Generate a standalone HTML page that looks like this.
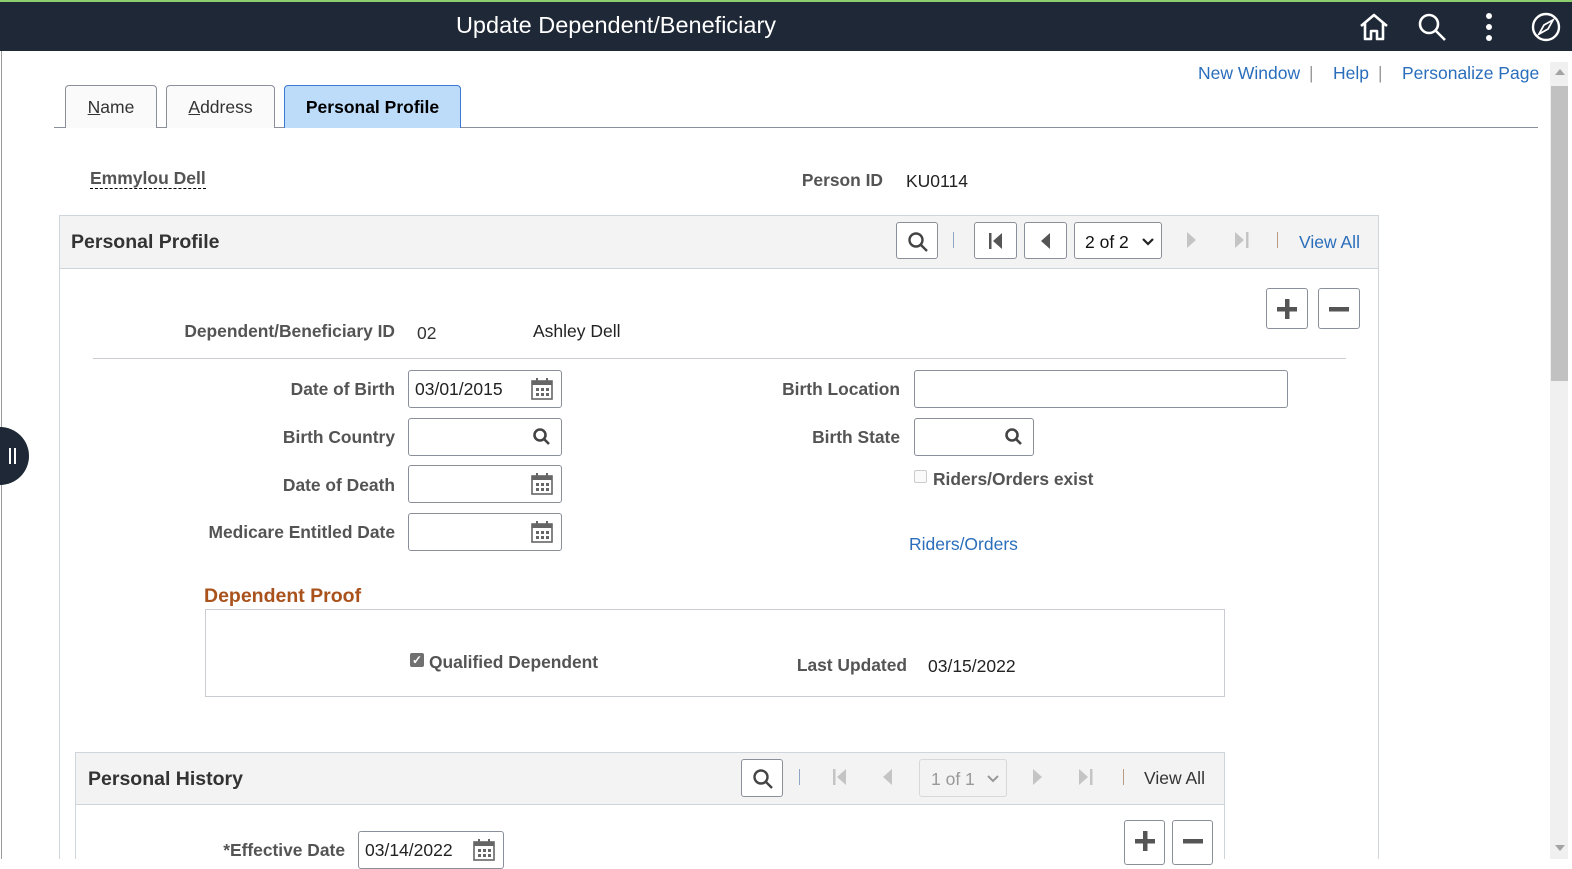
<!DOCTYPE html>
<html><head><style>
*{box-sizing:border-box;margin:0;padding:0}
body{width:1572px;height:859px;overflow:hidden;background:#fff;font-family:"Liberation Sans",sans-serif;position:relative;color:#333}
.a{position:absolute}
.hdr{left:0;top:0;width:1572px;height:51px;background:#1f2836;border-top:2px solid #8ccf6f}
.lbl{font-weight:bold;color:#545454;font-size:17.4px;text-align:right}
.box{border:1px solid #8a8f99;border-radius:3px;background:#fff}
.lnk{color:#2a6ebb;font-size:17.5px}
.btn{border:1px solid #8a8f99;border-radius:3px;background:#fff}
.cal{position:absolute;right:8px;top:7px;width:22px;height:22px}
</style></head><body>
<div class="a hdr"></div>
<div class="a" style="left:0;top:12px;width:1232px;text-align:center;color:#fff;font-size:23.5px">Update Dependent/Beneficiary</div>
<svg class="a" style="left:1358px;top:12px" width="32" height="30" viewBox="0 0 32 30" fill="none" stroke="#fff" stroke-width="2.6" stroke-linejoin="round"><path d="M3 14 L16 3 L29 14 M7 11 V27 H13 V19 H19 V27 H25 V11"/></svg>
<svg class="a" style="left:1416px;top:12px" width="32" height="30" viewBox="0 0 32 30" fill="none" stroke="#fff" stroke-width="2.6"><circle cx="13" cy="12" r="9"/><path d="M20 19 L29 28"/></svg>
<svg class="a" style="left:1480px;top:12px" width="18" height="30"><circle cx="9" cy="4" r="3" fill="#fff"/><circle cx="9" cy="15" r="3" fill="#fff"/><circle cx="9" cy="26" r="3" fill="#fff"/></svg>
<svg class="a" style="left:1530px;top:11px" width="32" height="32" viewBox="0 0 32 32" fill="none" stroke="#fff" stroke-width="2.4"><circle cx="16" cy="16" r="13"/><path d="M23 9 L18 18 L9 23 L14 14 Z" stroke-width="1.8"/></svg>
<div class="a" style="left:1px;top:51px;width:1px;height:808px;background:#999"></div>
<!-- scrollbar -->
<div class="a" style="left:1550px;top:62px;width:18px;height:797px;background:#f0f0f0"></div>
<div class="a" style="left:1551px;top:86px;width:17px;height:295px;background:#c1c1c1"></div>
<div class="a" style="left:1555px;top:69px;border:5px solid transparent;border-bottom:6px solid #a3a3a3;border-top:0"></div>
<div class="a" style="left:1555px;top:845px;border:5px solid transparent;border-top:6px solid #a3a3a3;border-bottom:0"></div>
<!-- links -->
<div class="a lnk" style="left:1198px;top:63px">New Window</div>
<div class="a" style="left:1309px;top:63px;color:#999;font-size:17.5px">|</div>
<div class="a lnk" style="left:1333px;top:63px">Help</div>
<div class="a" style="left:1378px;top:63px;color:#999;font-size:17.5px">|</div>
<div class="a lnk" style="left:1402px;top:63px">Personalize Page</div>
<!-- tabs -->
<div class="a" style="left:54px;top:127px;width:1484px;height:1px;background:#8a8f99"></div>
<div class="a" style="left:65px;top:85px;width:92px;height:43px;border:1px solid #8a8f99;border-bottom:0;border-radius:4px 4px 0 0;background:#fafafa;text-align:center;line-height:42px;font-size:17.5px"><u>N</u>ame</div>
<div class="a" style="left:166px;top:85px;width:109px;height:43px;border:1px solid #8a8f99;border-bottom:0;border-radius:4px 4px 0 0;background:#fafafa;text-align:center;line-height:42px;font-size:17.5px"><u>A</u>ddress</div>
<div class="a" style="left:284px;top:85px;width:177px;height:43px;border:1px solid #3a7ad0;border-bottom:0;border-radius:4px 4px 0 0;background:#bcdcfa;text-align:center;line-height:42px;font-size:17.5px;font-weight:bold;color:#000">Personal Profile</div>
<div class="a" style="left:90px;top:168px;font-size:17.5px;font-weight:bold;color:#545454;border-bottom:1px dashed #000;line-height:20px">Emmylou Dell</div>
<div class="a lbl" style="left:683px;top:170px;width:200px">Person ID</div>
<div class="a" style="left:906px;top:171px;font-size:17.5px;color:#222">KU0114</div>
<!-- personal profile panel -->
<div class="a" style="left:59px;top:215px;width:1320px;height:644px;border:1px solid #d0d5dc;border-bottom:0"></div>
<div class="a" style="left:60px;top:216px;width:1318px;height:53px;background:#f3f3f3;border-bottom:1px solid #d0d5dc"></div>
<div class="a" style="left:71px;top:231px;font-size:19.5px;font-weight:bold;color:#333">Personal Profile</div>
<div class="a btn" style="left:896px;top:222px;width:42px;height:37px"><svg style="margin:8px 0 0 10px" width="22" height="22" viewBox="0 0 22 22" fill="none" stroke="#444" stroke-width="2.4"><circle cx="9" cy="9" r="6.5"/><path d="M14 14 L20 20"/></svg></div>
<div class="a" style="left:953px;top:232px;width:1px;height:16px;background:#8ea6c4"></div>
<div class="a btn" style="left:974px;top:222px;width:43px;height:37px"><svg style="margin:10px 0 0 13px" width="16" height="16"><rect x="1" y="0" width="2.5" height="16" fill="#555"/><path d="M14 0 L5 8 L14 16Z" fill="#555"/></svg></div>
<div class="a btn" style="left:1024px;top:222px;width:43px;height:37px"><svg style="margin:10px 0 0 15px" width="12" height="16"><path d="M10 0 L1 8 L10 16Z" fill="#555"/></svg></div>
<div class="a btn" style="left:1074px;top:222px;width:88px;height:37px;font-size:17.5px;color:#111;padding:9px 0 0 10px">2 of 2<svg style="position:absolute;left:66px;top:14px" width="14" height="10" fill="none" stroke="#222" stroke-width="2.2"><path d="M2 2 L7 7 L12 2"/></svg></div>
<svg class="a" style="left:1186px;top:232px" width="12" height="16"><path d="M1 0 L10 8 L1 16Z" fill="#c4c4c4"/></svg>
<svg class="a" style="left:1234px;top:232px" width="16" height="16"><path d="M1 0 L10 8 L1 16Z" fill="#c4c4c4"/><rect x="12" y="0" width="2.5" height="16" fill="#c4c4c4"/></svg>
<div class="a" style="left:1277px;top:232px;width:1px;height:16px;background:#b99a82"></div>
<div class="a lnk" style="left:1299px;top:232px">View All</div>
<div class="a btn" style="left:1266px;top:288px;width:42px;height:41px"><svg style="margin:10px 0 0 10px" width="20" height="20"><rect x="8" y="0" width="4.5" height="20" fill="#555"/><rect x="0" y="8" width="20" height="4.5" fill="#555"/></svg></div>
<div class="a btn" style="left:1318px;top:288px;width:42px;height:41px"><svg style="margin:10px 0 0 10px" width="20" height="20"><rect x="0" y="8" width="20" height="4.5" fill="#555"/></svg></div>
<div class="a lbl" style="left:120px;top:321px;width:275px">Dependent/Beneficiary ID</div>
<div class="a" style="left:417px;top:323px;font-size:17.5px">02</div>
<div class="a" style="left:533px;top:321px;font-size:17.5px;color:#222">Ashley Dell</div>
<div class="a" style="left:93px;top:358px;width:1253px;height:1px;background:#c9cdd3"></div>
<!-- fields left -->
<div class="a lbl" style="left:120px;top:379px;width:275px">Date of Birth</div>
<div class="a box" style="left:408px;top:370px;width:154px;height:38px"><span style="position:absolute;left:6px;top:8px;font-size:17.5px;color:#222">03/01/2015</span>
<svg class="cal" viewBox="0 0 22 22"><rect x="1" y="3" width="20" height="18" fill="none" stroke="#666" stroke-width="1.6"/><rect x="1" y="3" width="20" height="4" fill="#666"/><rect x="5" y="0" width="2" height="4" fill="#666"/><rect x="15" y="0" width="2" height="4" fill="#666"/><g fill="#666"><rect x="5" y="10" width="3" height="3"/><rect x="10" y="10" width="3" height="3"/><rect x="15" y="10" width="3" height="3"/><rect x="5" y="15" width="3" height="3"/><rect x="10" y="15" width="3" height="3"/><rect x="15" y="15" width="3" height="3"/></g></svg></div>
<div class="a lbl" style="left:120px;top:427px;width:275px">Birth Country</div>
<div class="a box" style="left:408px;top:418px;width:154px;height:38px"><svg style="position:absolute;right:10px;top:8px" width="19" height="19" fill="none" stroke="#444" stroke-width="2.6"><circle cx="8" cy="8" r="5.5"/><path d="M12 12 L17 17"/></svg></div>
<div class="a lbl" style="left:120px;top:475px;width:275px">Date of Death</div>
<div class="a box" style="left:408px;top:465px;width:154px;height:38px"><svg class="cal" viewBox="0 0 22 22"><rect x="1" y="3" width="20" height="18" fill="none" stroke="#666" stroke-width="1.6"/><rect x="1" y="3" width="20" height="4" fill="#666"/><rect x="5" y="0" width="2" height="4" fill="#666"/><rect x="15" y="0" width="2" height="4" fill="#666"/><g fill="#666"><rect x="5" y="10" width="3" height="3"/><rect x="10" y="10" width="3" height="3"/><rect x="15" y="10" width="3" height="3"/><rect x="5" y="15" width="3" height="3"/><rect x="10" y="15" width="3" height="3"/><rect x="15" y="15" width="3" height="3"/></g></svg></div>
<div class="a lbl" style="left:120px;top:522px;width:275px">Medicare Entitled Date</div>
<div class="a box" style="left:408px;top:513px;width:154px;height:38px"><svg class="cal" viewBox="0 0 22 22"><rect x="1" y="3" width="20" height="18" fill="none" stroke="#666" stroke-width="1.6"/><rect x="1" y="3" width="20" height="4" fill="#666"/><rect x="5" y="0" width="2" height="4" fill="#666"/><rect x="15" y="0" width="2" height="4" fill="#666"/><g fill="#666"><rect x="5" y="10" width="3" height="3"/><rect x="10" y="10" width="3" height="3"/><rect x="15" y="10" width="3" height="3"/><rect x="5" y="15" width="3" height="3"/><rect x="10" y="15" width="3" height="3"/><rect x="15" y="15" width="3" height="3"/></g></svg></div>
<!-- right fields -->
<div class="a lbl" style="left:700px;top:379px;width:200px">Birth Location</div>
<div class="a box" style="left:914px;top:370px;width:374px;height:38px"></div>
<div class="a lbl" style="left:700px;top:427px;width:200px">Birth State</div>
<div class="a box" style="left:914px;top:418px;width:120px;height:38px"><svg style="position:absolute;right:10px;top:8px" width="19" height="19" fill="none" stroke="#444" stroke-width="2.6"><circle cx="8" cy="8" r="5.5"/><path d="M12 12 L17 17"/></svg></div>
<div class="a" style="left:914px;top:470px;width:13px;height:13px;border:1px solid #ccc;border-radius:2px;background:#fafafa"></div>
<div class="a lbl" style="left:933px;top:469px;text-align:left">Riders/Orders exist</div>
<div class="a lnk" style="left:909px;top:534px">Riders/Orders</div>
<!-- dependent proof -->
<div class="a" style="left:204px;top:585px;font-size:19.5px;font-weight:bold;color:#a9521c">Dependent Proof</div>
<div class="a" style="left:205px;top:609px;width:1020px;height:88px;border:1px solid #c9cdd3"></div>
<div class="a" style="left:410px;top:653px;width:14px;height:14px;border-radius:2px;background:#707070;color:#fff;font-size:12px;line-height:14px;text-align:center;font-weight:bold">✓</div>
<div class="a lbl" style="left:429px;top:652px;text-align:left">Qualified Dependent</div>
<div class="a lbl" style="left:707px;top:655px;width:200px">Last Updated</div>
<div class="a" style="left:928px;top:656px;font-size:17.5px;color:#222">03/15/2022</div>
<!-- personal history -->
<div class="a" style="left:75px;top:752px;width:1150px;height:107px;border:1px solid #d0d5dc;border-bottom:0"></div>
<div class="a" style="left:76px;top:753px;width:1148px;height:52px;background:#f3f3f3;border-bottom:1px solid #d0d5dc"></div>
<div class="a" style="left:88px;top:768px;font-size:19.5px;font-weight:bold;color:#333">Personal History</div>
<div class="a btn" style="left:741px;top:759px;width:42px;height:38px"><svg style="margin:8px 0 0 10px" width="22" height="22" viewBox="0 0 22 22" fill="none" stroke="#444" stroke-width="2.4"><circle cx="9" cy="9" r="6.5"/><path d="M14 14 L20 20"/></svg></div>
<div class="a" style="left:799px;top:769px;width:1px;height:16px;background:#8ea6c4"></div>
<svg class="a" style="left:832px;top:769px" width="16" height="16"><rect x="1" y="0" width="2.5" height="16" fill="#c4c4c4"/><path d="M14 0 L5 8 L14 16Z" fill="#c4c4c4"/></svg>
<svg class="a" style="left:882px;top:769px" width="12" height="16"><path d="M10 0 L1 8 L10 16Z" fill="#c4c4c4"/></svg>
<div class="a" style="left:919px;top:759px;width:88px;height:38px;border:1px solid #d8d8d8;border-radius:3px;background:#f3f3f3;font-size:17.5px;color:#999;padding:9px 0 0 11px">1 of 1<svg style="position:absolute;left:66px;top:14px" width="14" height="10" fill="none" stroke="#999" stroke-width="2"><path d="M2 2 L7 7 L12 2"/></svg></div>
<svg class="a" style="left:1032px;top:769px" width="12" height="16"><path d="M1 0 L10 8 L1 16Z" fill="#c4c4c4"/></svg>
<svg class="a" style="left:1078px;top:769px" width="16" height="16"><path d="M1 0 L10 8 L1 16Z" fill="#c4c4c4"/><rect x="12" y="0" width="2.5" height="16" fill="#c4c4c4"/></svg>
<div class="a" style="left:1123px;top:769px;width:1px;height:16px;background:#b99a82"></div>
<div class="a" style="left:1144px;top:768px;font-size:17.5px;color:#333">View All</div>
<div class="a btn" style="left:1124px;top:820px;width:41px;height:45px"><svg style="margin:10px 0 0 10px" width="20" height="20"><rect x="8" y="0" width="4.5" height="20" fill="#555"/><rect x="0" y="8" width="20" height="4.5" fill="#555"/></svg></div>
<div class="a btn" style="left:1172px;top:820px;width:41px;height:45px"><svg style="margin:10px 0 0 10px" width="20" height="20"><rect x="0" y="8" width="20" height="4.5" fill="#555"/></svg></div>
<div class="a lbl" style="left:120px;top:840px;width:225px">*Effective Date</div>
<div class="a box" style="left:358px;top:831px;width:146px;height:38px"><span style="position:absolute;left:6px;top:8px;font-size:17.5px;color:#222">03/14/2022</span><svg class="cal" viewBox="0 0 22 22"><rect x="1" y="3" width="20" height="18" fill="none" stroke="#666" stroke-width="1.6"/><rect x="1" y="3" width="20" height="4" fill="#666"/><rect x="5" y="0" width="2" height="4" fill="#666"/><rect x="15" y="0" width="2" height="4" fill="#666"/><g fill="#666"><rect x="5" y="10" width="3" height="3"/><rect x="10" y="10" width="3" height="3"/><rect x="15" y="10" width="3" height="3"/><rect x="5" y="15" width="3" height="3"/><rect x="10" y="15" width="3" height="3"/><rect x="15" y="15" width="3" height="3"/></g></svg></div>
<!-- side tab -->
<div class="a" style="left:0;top:427px;width:29px;height:58px;background:#1f2836;border-radius:0 29px 29px 0"></div>
<div class="a" style="left:9px;top:448px;width:2px;height:16px;background:#fff"></div>
<div class="a" style="left:14px;top:448px;width:2px;height:16px;background:#fff"></div>
</body></html>
